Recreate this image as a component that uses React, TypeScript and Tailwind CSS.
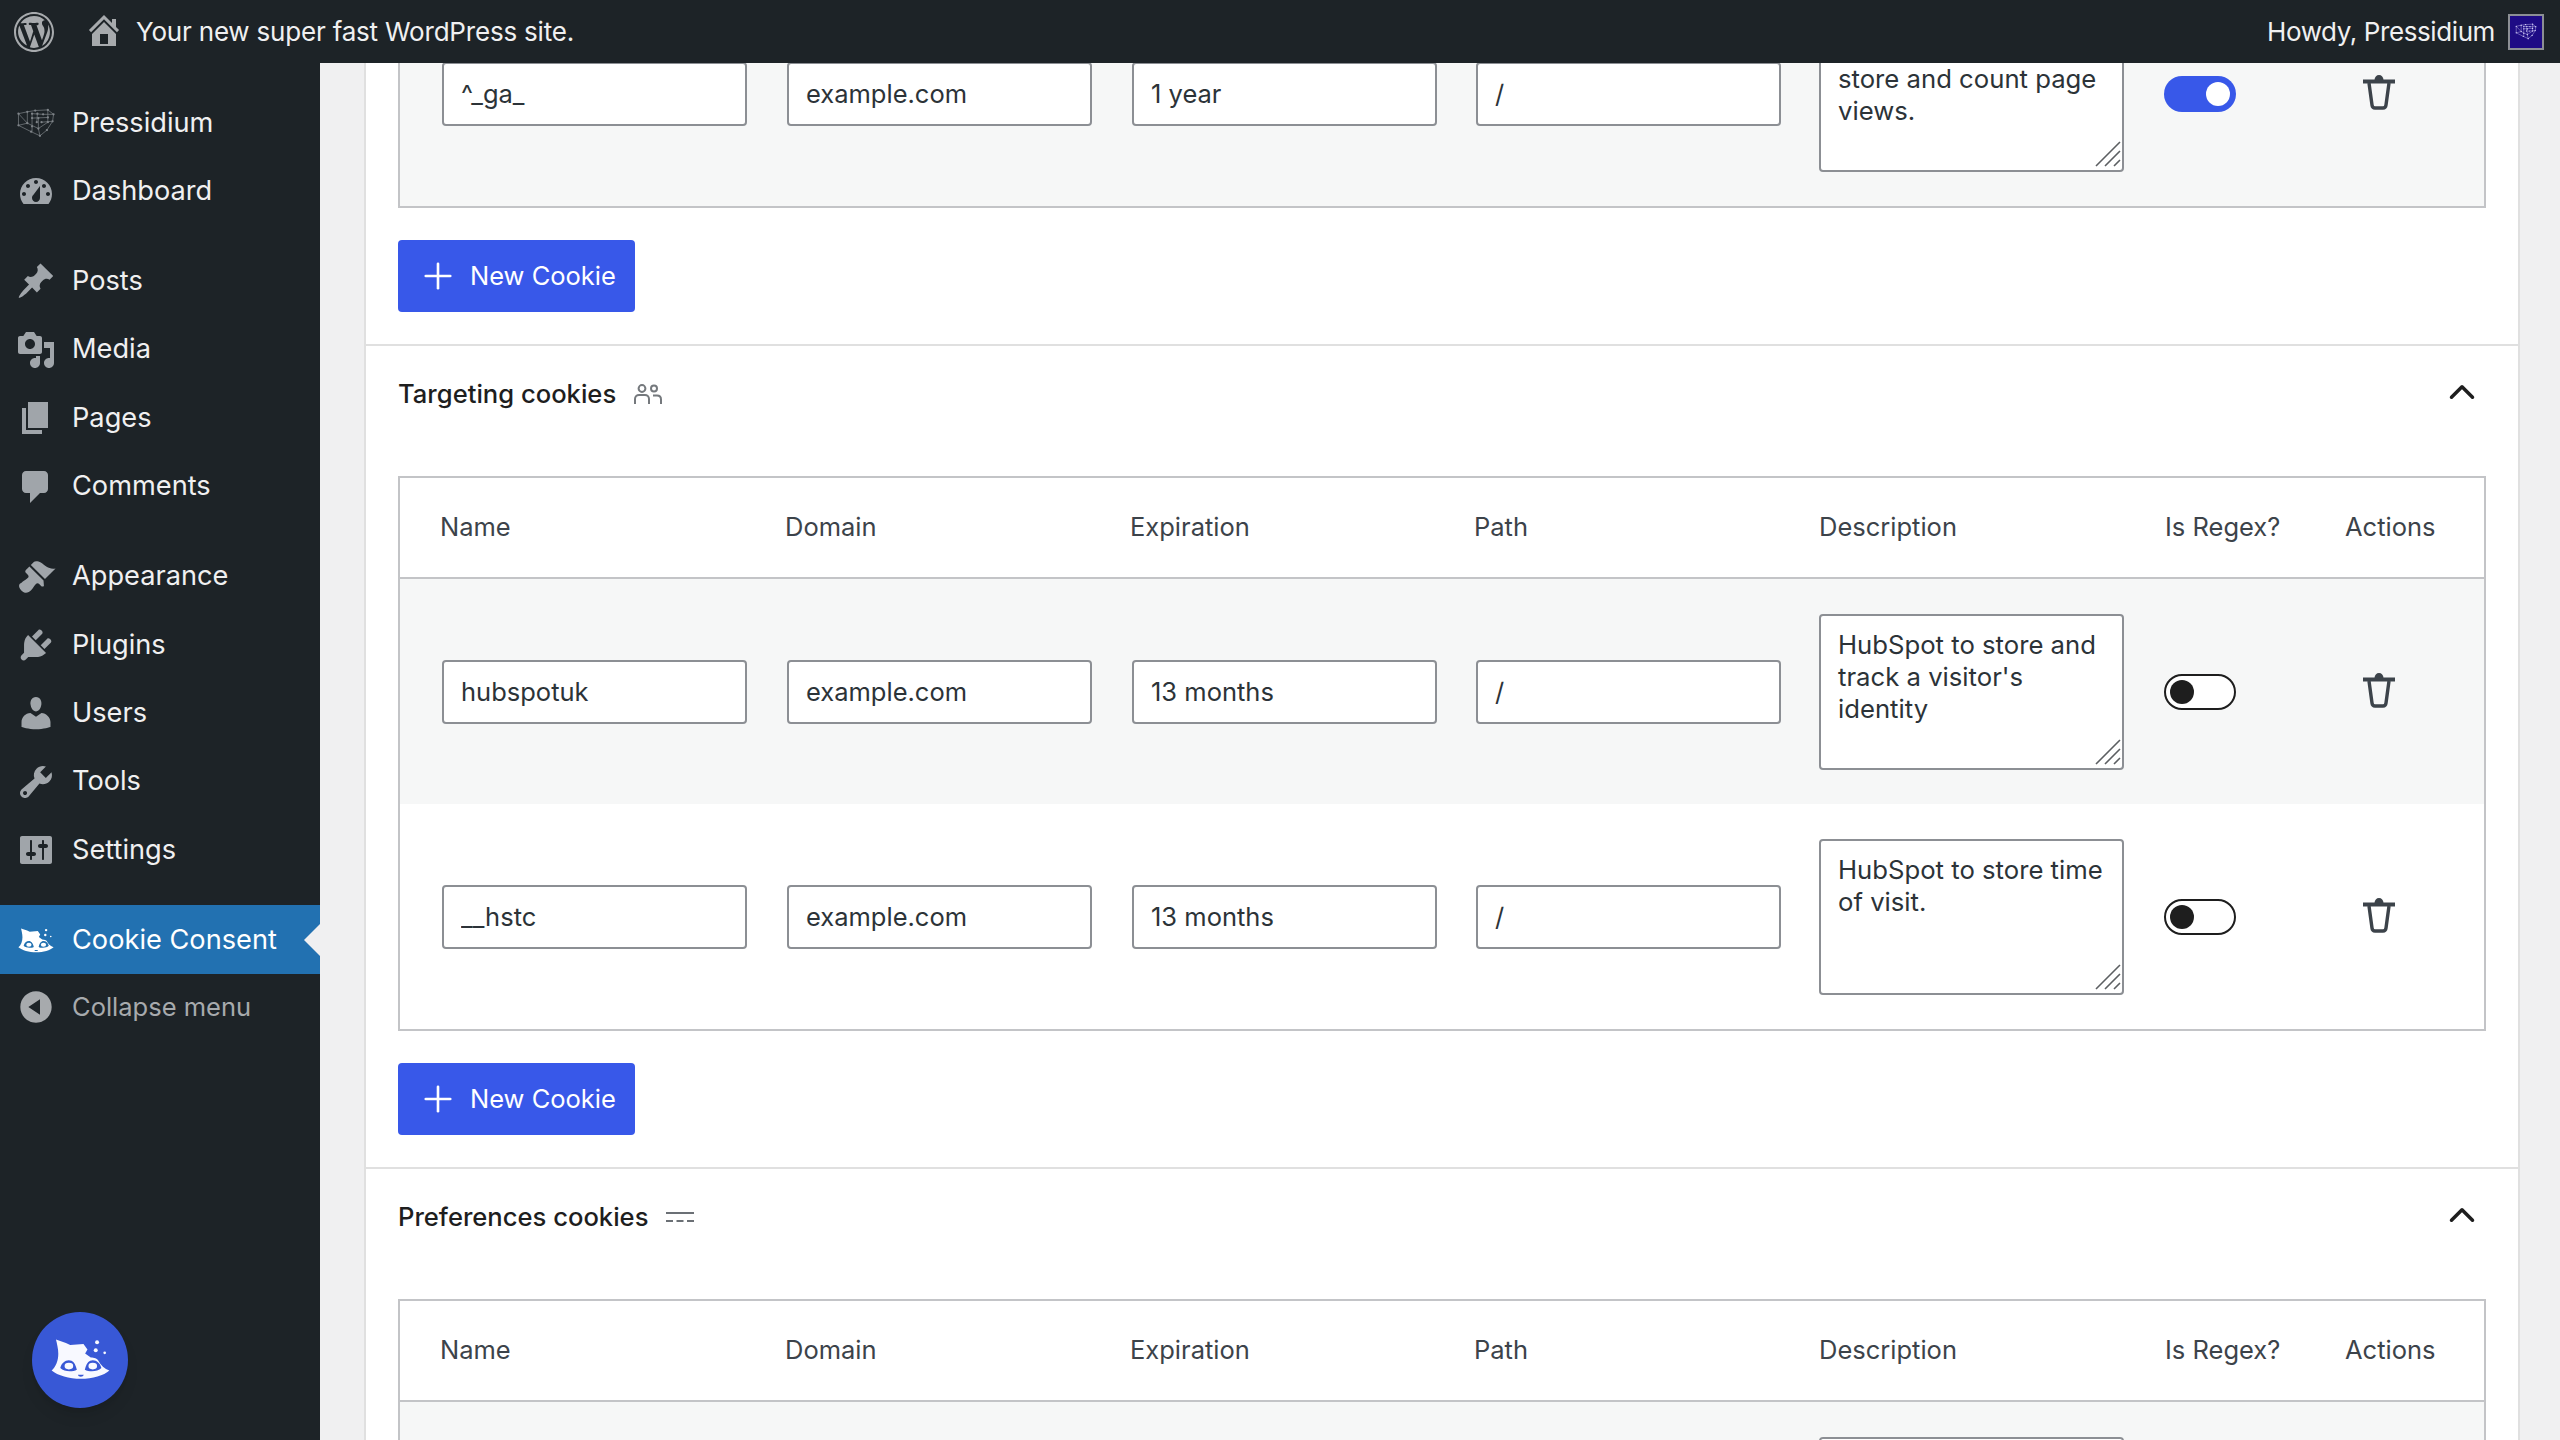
import { ReactNode } from "react";
import { ChevronUp, Plus } from "lucide-react";

const sans = "font-['Inter','Liberation_Sans',sans-serif]";

// dashicon paths, all on a 20x20 box
const ICONS: Record<string, string> = {
  dashboard:
    "M3.76 16h12.48c1.1-1.37 1.76-3.11 1.76-5 0-4.42-3.58-8-8-8s-8 3.58-8 8c0 1.89.66 3.63 1.76 5zM10 4c.55 0 1 .45 1 1s-.45 1-1 1-1-.45-1-1 .45-1 1-1zM6 6c.55 0 1 .45 1 1s-.45 1-1 1-1-.45-1-1 .45-1 1-1zm8 0c.55 0 1 .45 1 1s-.45 1-1 1-1-.45-1-1 .45-1 1-1zm-5.37 5.55L12 7v6c0 1.1-.9 2-2 2s-2-.9-2-2c0-.57.24-1.08.63-1.45zM4 10c.55 0 1 .45 1 1s-.45 1-1 1-1-.45-1-1 .45-1 1-1zm12 0c.55 0 1 .45 1 1s-.45 1-1 1-1-.45-1-1 .45-1 1-1z",
  posts:
    "M10.44 3.02l1.82-1.82 6.36 6.35-1.83 1.82c-1.05-.68-2.48-.57-3.41.36l-.75.75c-.92.93-1.04 2.35-.35 3.41l-1.83 1.82-2.41-2.41-2.8 2.79c-.42.42-3.38 2.71-3.8 2.29s1.86-3.39 2.28-3.81l2.79-2.79L4.1 9.36l1.83-1.82c1.05.69 2.48.57 3.4-.36l.75-.75c.93-.92 1.05-2.35.36-3.41z",
  media:
    "M13 11V4c0-.55-.45-1-1-1h-1.67L9 1H5L3.67 3H2c-.55 0-1 .45-1 1v7c0 .55.45 1 1 1h10c.55 0 1-.45 1-1zM7 4.5c1.38 0 2.5 1.12 2.5 2.5S8.38 9.5 7 9.5 4.5 8.38 4.5 7 5.62 4.5 7 4.5zM14 6h5v10.5c0 1.38-1.12 2.5-2.5 2.5S14 17.88 14 16.5s1.12-2.5 2.5-2.5c.17 0 .34.02.5.05V9h-3V6zm-4 8.05V13h2v3.5c0 1.38-1.12 2.5-2.5 2.5S7 17.88 7 16.5 8.12 14 9.5 14c.17 0 .34.02.5.05z",
  pages: "M6 15V2h10v13H6zm-1 1h8v2H3V5h2v11z",
  comments: "M5 2h9c1.1 0 2 .9 2 2v7c0 1.1-.9 2-2 2h-2l-5 5v-5H5c-1.1 0-2-.9-2-2V4c0-1.1.9-2 2-2z",
  appearance:
    "M14.48 11.06L7.41 3.99l1.5-1.5c.5-.56 2.3-.47 3.51.32 1.21.8 1.43 1.28 2.91 2.1 1.18.64 2.45 1.26 4.45.85zm-.71.71L6.7 4.7 4.93 6.47c-.39.39-.39 1.02 0 1.41l1.06 1.06c.39.39.39 1.03 0 1.42-.6.6-1.43 1.11-2.21 1.69-.35.26-.7.53-1.01.84C1.43 13.23.91 14.96 2.67 16.72s3.53 1.25 4.87-.09c.32-.32.59-.66.84-1.01.58-.78 1.09-1.61 1.69-2.21.39-.39 1.03-.39 1.42 0l1.06 1.06c.39.39 1.02.39 1.41 0z",
  plugins:
    "M13.11 4.36L9.87 7.6 8 5.73l3.24-3.24c.35-.34 1.05-.2 1.56.32.52.51.66 1.21.31 1.55zm-8 1.77l.91-1.12 9.01 9.01-1.19.84c-.71.71-2.63 1.16-3.82 1.16H6.14L4.9 17.26c-.59.59-1.54.59-2.12 0-.59-.58-.59-1.53 0-2.12l1.24-1.24v-3.88c0-1.13.4-3.19 1.09-3.89zm7.26 3.97l3.24-3.24c.34-.35 1.04-.21 1.55.31.52.51.66 1.21.31 1.55l-3.24 3.25z",
  users:
    "M10 9.25c-2.27 0-2.73-3.44-2.73-3.44C7 4.02 7.82 2 9.97 2c2.16 0 2.98 2.02 2.71 3.81 0 0-.41 3.44-2.68 3.44zm0 2.57L12.72 10c2.39 0 4.52 2.33 4.52 4.53v2.49s-3.65 1.13-7.24 1.13c-3.65 0-7.24-1.13-7.24-1.13v-2.49c0-2.25 1.94-4.48 4.47-4.48z",
  tools:
    "M16.68 9.77c-1.34 1.34-3.3 1.67-4.95.99l-5.41 6.52c-.99.99-2.59.99-3.58 0s-.99-2.59 0-3.57l6.52-5.42c-.68-1.65-.35-3.61.99-4.95 1.28-1.28 3.12-1.62 4.72-1.06l-2.89 2.89 2.82 2.82 2.86-2.87c.53 1.58.18 3.39-1.08 4.65zM3.81 16.21c.4.39 1.04.39 1.43 0 .4-.4.4-1.04 0-1.43-.39-.4-1.03-.4-1.43 0-.39.39-.39 1.03 0 1.43z",
  settings:
    "M18 16V4c0-.55-.45-1-1-1H3c-.55 0-1 .45-1 1v12c0 .55.45 1 1 1h14c.55 0 1-.45 1-1zM8 11h1c.55 0 1 .45 1 1s-.45 1-1 1H8v1.5c0 .28-.22.5-.5.5s-.5-.22-.5-.5V13H6c-.55 0-1-.45-1-1s.45-1 1-1h1V5.5c0-.28.22-.5.5-.5s.5.22.5.5V11zm5-2h-1c-.55 0-1-.45-1-1s.45-1 1-1h1V5.5c0-.28.22-.5.5-.5s.5.22.5.5V7h1c.55 0 1 .45 1 1s-.45 1-1 1h-1v5.5c0 .28-.22.5-.5.5s-.5-.22-.5-.5V9z",
  collapse: "M10 2.16c4.33 0 7.84 3.51 7.84 7.84s-3.51 7.84-7.84 7.84S2.16 14.33 2.16 10 5.71 2.16 10 2.16zm2 11.72V6.12L6.18 9.97z",
  home: "M16 8.5l1.53 1.53-1.06 1.06L10 4.62l-6.47 6.47-1.06-1.06L10 2.5l4 4v-2h2v4zm-6-2.46l6 5.99V18H4v-5.97zM12 17v-5H8v5h4z",
  wp: "M20 10c0-5.52-4.48-10-10-10S0 4.48 0 10s4.48 10 10 10 10-4.48 10-10zM10 1.01c4.97 0 8.99 4.02 8.99 8.99s-4.02 8.99-8.99 8.99S1.01 14.97 1.01 10 5.03 1.01 10 1.01zM8.01 14.82L4.96 6.61c.49-.03 1.05-.08 1.05-.08.43-.05.38-1.01-.06-.99 0 0-1.29.1-2.13.1-.15 0-.33 0-.52-.01 1.44-2.17 3.9-3.6 6.7-3.6 2.09 0 3.99.79 5.41 2.09-.6-.08-1.45.35-1.45 1.42 0 .66.38 1.22.79 1.88.31.54.5 1.22.5 2.21 0 1.34-1.27 4.48-1.27 4.48l-2.71-7.5c.48-.03.75-.16.75-.16.43-.05.38-1.1-.05-1.08 0 0-1.3.11-2.14.11-.78 0-2.11-.11-2.11-.11-.43-.02-.48 1.06-.05 1.08l.84.08 1.12 3.04zm6.02 2.15L16.64 10s.67-1.69.39-3.81c.63 1.14.94 2.42.94 3.81 0 2.96-1.56 5.58-3.94 6.97zM2.68 6.77L6.5 16.79c-2.67-1.3-4.47-4.08-4.47-6.79 0-1.02.18-2.34.65-3.23zm7.45 4.53l2.3 6.26c-.77.25-1.58.39-2.43.39-.71 0-1.4-.1-2.05-.29z",
};

const Dash = ({ name, className }: { name: string; className: string }) => (
  <svg viewBox="0 0 20 20" className={className} fill="currentColor" fillRule="evenodd">
    <path d={ICONS[name]} />
  </svg>
);

// the plugin's bitten cat head, eyes and nose are holes
const CatIcon = ({ className }: { className: string }) => (
  <svg viewBox="30 35 178 128" className={className} fill="currentColor">
    <path
      fillRule="evenodd"
      d="M45 42 L75 52 L88 58 L128 55 L140 72 L133 84 L150 96 C160 96 170 100 172 104 C180 120 192 130 206 135 C190 150 155 160 120 160 C85 160 50 150 32 135 C45 125 52 105 52 85 C52 70 48 55 45 42Z M58 128 C62 110 78 100 92 106 C100 110 105 120 108 133 C95 140 70 140 58 128Z M182 128 C178 110 162 100 148 106 C140 110 135 120 132 133 C145 140 170 140 182 128Z M111 148 H129 C127 156 113 156 111 148Z"
    />
    <ellipse cx="84" cy="122" rx="13" ry="10" />
    <ellipse cx="156" cy="122" rx="13" ry="10" />
    <circle cx="169" cy="50" r="6" />
    <circle cx="165" cy="74" r="6" />
    <circle cx="192" cy="82" r="4" />
  </svg>
);

const CUBE_NODES = [
  [22, 48], [50, 42], [75, 38], [115, 36], [133, 50], [130, 72], [112, 100], [90, 118], [62, 105], [22, 85], [50, 78],
  [65, 48], [82, 48], [100, 50], [115, 60], [85, 62], [65, 62], [65, 88], [85, 95], [115, 75], [95, 75], [80, 75],
];

// dotted cube of the host's logo
const CubeIcon = ({ className }: { className: string }) => (
  <svg viewBox="15 30 125 95" className={className} fill="none" stroke="currentColor" strokeWidth="2.2">
    <path d="M22 48 50 42 75 38 115 36 133 50 130 72 112 100 90 118 62 105 22 85Z M22 48 50 78 50 42 M50 78 22 85 M65 48 65 105 M65 48 100 50 133 50 M65 62 115 60 M50 78 85 95 90 118 M85 62 85 95 115 75 115 36 M95 75 130 72 M82 48 80 75" />
    {CUBE_NODES.map(([x, y], i) => (
      <circle key={i} cx={x} cy={y} r="3.6" fill="currentColor" stroke="none" />
    ))}
  </svg>
);

const TrashIcon = () => (
  <svg viewBox="0 0 32 35" className="w-[32px] h-[35px] ml-[18px] -mt-[3px] text-[#3c434a]" fill="none" stroke="currentColor">
    <path d="M0 6.5 H32" strokeWidth="4" />
    <path d="M11.5 5 C11.5 2 13.5 0 16 0 C18.5 0 20.5 2 20.5 5 Z" fill="currentColor" stroke="none" />
    <path d="M6 8 L9 30 C9.3 32.3 10 33 12 33 H20 C22 33 22.7 32.3 23 30 L26 8" strokeWidth="3.4" />
  </svg>
);

const ResizeGrip = () => (
  <svg viewBox="0 0 26 26" className="absolute right-[3px] bottom-[5px] w-[26px] h-[26px] text-[#5c5f62]" stroke="currentColor" strokeWidth="1.6">
    <path d="M1 25 25 1M10 25 25 10M19 25 25 19" />
  </svg>
);

const PeopleIcon = () => (
  <svg viewBox="0 0 28 20" className="w-[28px] h-[20px] text-[#75797d]" fill="none" stroke="currentColor" strokeWidth="2">
    <circle cx="8" cy="4.5" r="3.4" />
    <circle cx="20" cy="4.5" r="3" />
    <path d="M1 20 V15 C1 12.5 3 11 5 11 H11 C13 11 15 12.5 15 15 V20" />
    <path d="M19 11.5 H23 C25.5 11.5 27 13 27 15.5 V20" />
  </svg>
);

const LinesIcon = () => (
  <svg viewBox="0 0 28 10" className="w-[28px] h-[10px] text-[#6b7075]" stroke="currentColor" strokeWidth="2">
    <path d="M0 1 H28" />
    <path d="M0 9 H7 M10.5 9 H17.5 M21 9 H28" />
  </svg>
);

const rowGrid = "grid grid-cols-[345px_345px_344px_343px_345px_181px_1fr]";
const headGrid = "grid grid-cols-[345px_345px_344px_345px_346px_180px_1fr]";

const Field = ({ value }: { value: string }) => (
  <input
    readOnly
    value={value}
    className={`w-[305px] h-[64px] bg-white border-2 border-[#8c8f94] rounded-[4px] pl-[17px] text-[25.5px] text-[#2c3338] outline-none ${sans}`}
  />
);

const Toggle = ({ on }: { on?: boolean }) =>
  on ? (
    <div className="w-[72px] h-[36px] rounded-full bg-[#3858e9] flex items-center justify-end pr-[6px]">
      <div className="w-[24px] h-[24px] rounded-full bg-white" />
    </div>
  ) : (
    <div className="w-[72px] h-[36px] rounded-full border-2 border-[#1e1e1e] bg-white flex items-center pl-[4px]">
      <div className="w-[24px] h-[24px] rounded-full bg-[#1e1e1e]" />
    </div>
  );

type Cookie = { name: string; expiry: string; description: string; regex?: boolean };

const CookieRow = ({ cookie, odd }: { cookie: Cookie; odd: boolean }) => (
  <div className={`${rowGrid} pl-[42px] items-center py-[34.5px] ${odd ? "bg-[#f6f7f7]" : "bg-white"}`}>
    <Field value={cookie.name} />
    <Field value="example.com" />
    <Field value={cookie.expiry} />
    <Field value="/" />
    <div className="relative w-[305px] h-[156px]">
      <textarea
        readOnly
        wrap="off"
        value={cookie.description}
        className={`w-full h-full resize-none bg-white border-2 border-[#8c8f94] rounded-[4px] pl-[17px] pr-[2px] py-[13px] text-[25.7px] leading-[32px] text-[#2c3338] outline-none overflow-hidden ${sans}`}
      />
      <ResizeGrip />
    </div>
    <Toggle on={cookie.regex} />
    <TrashIcon />
  </div>
);

const HEADERS = ["Name", "Domain", "Expiration", "Path", "Description", "Is Regex?", "Actions"];

const CookieTable = ({ rows }: { rows: Cookie[] }) => (
  <div className="border-2 border-[#c3c4c7] bg-white">
    <div className={`${headGrid} pl-[40px] h-[101px] items-center border-b-2 border-[#c3c4c7]`}>
      {HEADERS.map((h) => (
        <div key={h} className="text-[25.5px] text-[#3c434a]">
          {h}
        </div>
      ))}
    </div>
    {rows.map((r, i) => (
      <CookieRow key={r.name} cookie={r} odd={i % 2 === 0} />
    ))}
  </div>
);

const NewCookie = () => (
  <div className="px-[32px] py-[32px]">
    <button className="w-[237px] h-[72px] bg-[#3858e9] rounded-[4px] flex items-center pl-[19px] text-white text-[25.5px]">
      <Plus size={42} strokeWidth={1.5} className="mr-[11px]" />
      New Cookie
    </button>
  </div>
);

const Section = ({ title, icon, children }: { title: string; icon: ReactNode; children: ReactNode }) => (
  <div className="border-t-2 border-[#e0e0e0]">
    <div className="flex items-center h-[96px] px-[32px]">
      <span className="text-[25.6px] font-medium text-[#1e1e1e]">{title}</span>
      <span className="ml-[18px] flex">{icon}</span>
      <ChevronUp size={42} strokeWidth={2} className="ml-auto mr-[3px] -mt-[4px] text-[#1e1e1e]" />
    </div>
    <div className="px-[32px] pt-[34px]">{children}</div>
  </div>
);

const MENU = [
  [{ name: "Dashboard", icon: "dashboard" }],
  [
    { name: "Posts", icon: "posts" },
    { name: "Media", icon: "media" },
    { name: "Pages", icon: "pages" },
    { name: "Comments", icon: "comments" },
  ],
  [
    { name: "Appearance", icon: "appearance" },
    { name: "Plugins", icon: "plugins" },
    { name: "Users", icon: "users" },
    { name: "Tools", icon: "tools" },
    { name: "Settings", icon: "settings" },
  ],
];

const MenuItem = ({ icon, name }: { icon: ReactNode; name: string }) => (
  <div className="flex items-center h-[68.4px] text-[#f0f0f1] text-[27.2px]">
    <div className="w-[72px] flex justify-center text-[#a0a5aa]">{icon}</div>
    {name}
  </div>
);

const Sidebar = () => (
  <aside className="relative w-[320px] shrink-0 bg-[#1d2327] pt-[26px]">
    <MenuItem name="Pressidium" icon={<CubeIcon className="w-[40px] h-[30px] opacity-75" />} />
    {MENU.map((group, i) => (
      <div key={i} className={i === 0 ? "" : "mt-[21.5px]"}>
        {group.map((m) => (
          <MenuItem key={m.name} name={m.name} icon={<Dash name={m.icon} className="w-[40px] h-[40px]" />} />
        ))}
      </div>
    ))}
    <div className="relative mt-[21px] h-[69px] bg-[#2271b1] flex items-center text-white text-[27.2px]">
      <div className="w-[72px] flex justify-center">
        <CatIcon className="w-[36px] h-[26px]" />
      </div>
      <span className="pt-[2px]">Cookie Consent</span>
      <div className="absolute right-0 top-[19px] w-0 h-0 border-y-[16px] border-y-transparent border-r-[16px] border-r-[#f0f0f1]" />
    </div>
    <div className="flex items-center h-[66px] text-[#a7aaad] text-[25.5px]">
      <div className="w-[72px] flex justify-center">
        <Dash name="collapse" className="w-[40px] h-[40px]" />
      </div>
      Collapse menu
    </div>
    <div className="absolute left-[32px] bottom-[32px] w-[96px] h-[96px] rounded-full bg-[#3858d6] shadow-lg flex items-center justify-center text-[#f8f9ff]">
      <CatIcon className="w-[59px] h-[43px] -mt-[4px]" />
    </div>
  </aside>
);

const TopBar = () => (
  <header className="h-[63px] shrink-0 bg-[#1d2327] flex items-center text-[#f0f0f1] text-[26px] z-10">
    <Dash name="wp" className="ml-[14px] w-[40px] h-[40px] text-[#a7aaad]" />
    <Dash name="home" className="ml-[30px] w-[40px] h-[40px] text-[#a7aaad] -mt-[4px]" />
    <span className="ml-[12px] tracking-[-0.2px]">Your new super fast WordPress site.</span>
    <span className="ml-auto tracking-[-0.4px]">Howdy, Pressidium</span>
    <div className="ml-[13px] mr-[16px] w-[36px] h-[36px] border-2 border-[#8c8f94] bg-[#1e0b85] flex items-center justify-center text-[#dcd8ff]">
      <CubeIcon className="w-[22px] h-[17px]" />
    </div>
  </header>
);

export default function App() {
  return (
    <div className={`h-screen w-full flex flex-col overflow-hidden bg-[#f0f0f1] ${sans}`}>
      <TopBar />
      <div className="flex-1 flex min-h-0">
        <Sidebar />
        <main className="flex-1 min-w-0 overflow-hidden pl-[44px] pr-[40px]">
          <div className="-mt-[82px] bg-white border-x-2 border-[#e0e0e0]">
            {/* scrolled past the top of the first table */}
            <div className="px-[32px]">
              <div className="border-2 border-t-0 border-[#c3c4c7]">
                <CookieRow
                  odd
                  cookie={{
                    name: "^_ga_",
                    expiry: "1 year",
                    description: "Google Analytics to\nstore and count page\nviews.",
                    regex: true,
                  }}
                />
              </div>
            </div>
            <NewCookie />
            <Section title="Targeting cookies" icon={<PeopleIcon />}>
              <CookieTable
                rows={[
                  { name: "hubspotuk", expiry: "13 months", description: "HubSpot to store and\ntrack a visitor's\nidentity" },
                  { name: "__hstc", expiry: "13 months", description: "HubSpot to store time\nof visit." },
                ]}
              />
            </Section>
            <NewCookie />
            <Section title="Preferences cookies" icon={<LinesIcon />}>
              <CookieTable rows={[{ name: "pref", expiry: "1 year", description: "" }]} />
            </Section>
          </div>
        </main>
      </div>
    </div>
  );
}
